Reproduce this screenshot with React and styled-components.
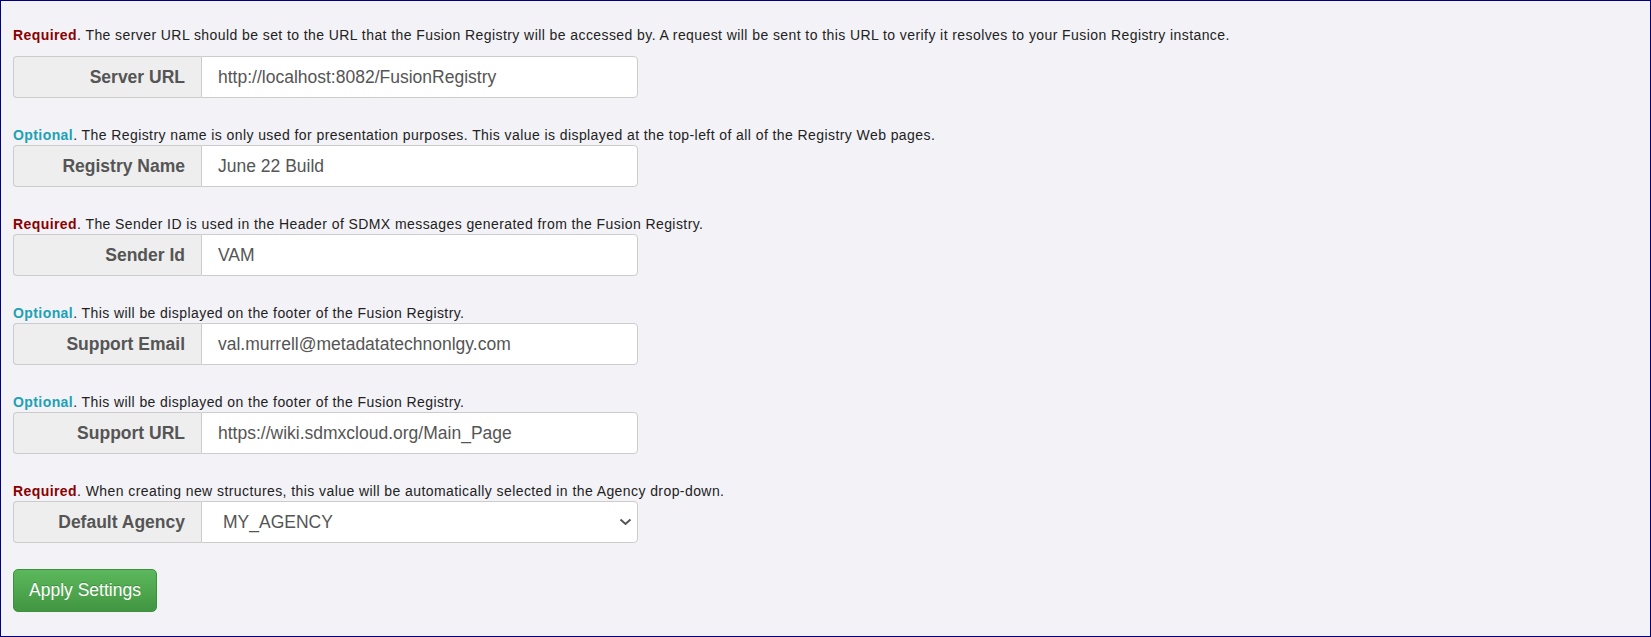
import React from 'react';
import styled, { createGlobalStyle } from 'styled-components';

const GlobalStyle = createGlobalStyle`
  html, body {
    margin: 0;
    padding: 0;
    background: #f2f2f7;
  }
  * {
    box-sizing: border-box;
  }
`;

const fields = [
  {
    level: 'required',
    note: 'The server URL should be set to the URL that the Fusion Registry will be accessed by. A request will be sent to this URL to verify it resolves to your Fusion Registry instance.',
    label: 'Server URL',
    value: 'http://localhost:8082/FusionRegistry',
  },
  {
    level: 'optional',
    note: 'The Registry name is only used for presentation purposes. This value is displayed at the top-left of all of the Registry Web pages.',
    label: 'Registry Name',
    value: 'June 22 Build',
  },
  {
    level: 'required',
    note: 'The Sender ID is used in the Header of SDMX messages generated from the Fusion Registry.',
    label: 'Sender Id',
    value: 'VAM',
  },
  {
    level: 'optional',
    note: 'This will be displayed on the footer of the Fusion Registry.',
    label: 'Support Email',
    value: 'val.murrell@metadatatechnonlgy.com',
  },
  {
    level: 'optional',
    note: 'This will be displayed on the footer of the Fusion Registry.',
    label: 'Support URL',
    value: 'https://wiki.sdmxcloud.org/Main_Page',
  },
  {
    level: 'required',
    note: 'When creating new structures, this value will be automatically selected in the Agency drop-down.',
    label: 'Default Agency',
    value: 'MY_AGENCY',
    select: true,
  },
];

const Chevron = () => (
  <svg width="13" height="8" viewBox="0 0 13 8">
    <path d="M1.5 1.5 L6.5 6 L11.5 1.5" fill="none" stroke="#555" strokeWidth="2" />
  </svg>
);

const App = () => {
  return (
    <>
      <GlobalStyle />
      <Page>
        {fields.map((f, i) => (
          <Group key={f.label}>
            <Note $first={i === 0}>
              <Level $level={f.level}>{f.level === 'required' ? 'Required' : 'Optional'}</Level>. {f.note}
            </Note>
            <InputGroup>
              <Addon>{f.label}</Addon>
              {f.select ? (
                <SelectBox>
                  <span>{f.value}</span>
                  <Chevron />
                </SelectBox>
              ) : (
                <Field>{f.value}</Field>
              )}
            </InputGroup>
          </Group>
        ))}
        <ApplyButton>Apply Settings</ApplyButton>
      </Page>
    </>
  );
};

const Page = styled.div`
  width: 1651px;
  height: 637px;
  border: 1px solid #000080;
  background: #f2f2f7;
  padding: 24px 12px 0 12px;
  font-family: "Liberation Sans", Arial, sans-serif;
`;

const Group = styled.div`
  margin-bottom: 27px;
`;

const Note = styled.div`
  font-size: 14px;
  letter-spacing: 0.42px;
  line-height: 20px;
  color: #222;
  white-space: nowrap;
  margin-bottom: ${p => (p.$first ? '11px' : '0')};
`;

const Level = styled.b`
  color: ${p => (p.$level === 'required' ? '#8b0000' : '#1da1b4')};
`;

const InputGroup = styled.div`
  display: flex;
  width: 625px;
  height: 42px;
  font-size: 17.5px;
  color: #555;
`;

const Addon = styled.div`
  width: 188px;
  flex: none;
  display: flex;
  align-items: center;
  justify-content: flex-end;
  padding: 0 16px;
  font-weight: bold;
  background: #eee;
  border: 1px solid #ccc;
  border-right: 0;
  border-radius: 4px 0 0 4px;
`;

const Field = styled.div`
  flex: 1;
  display: flex;
  align-items: center;
  padding: 0 16px;
  background: #fff;
  border: 1px solid #ccc;
  border-radius: 0 4px 4px 0;
`;

const SelectBox = styled(Field)`
  justify-content: space-between;
  padding: 0 5px 0 21px;
`;

const ApplyButton = styled.button`
  display: block;
  width: 144px;
  height: 43px;
  margin-top: -1px;
  padding: 0;
  white-space: nowrap;
  font-family: "Liberation Sans", Arial, sans-serif;
  font-size: 17.5px;
  color: #fff;
  background: linear-gradient(#5cb85c, #419641);
  border: 1px solid #3e8f3e;
  border-radius: 5px;
  text-shadow: 0 -1px 0 rgba(0, 0, 0, 0.2);
`;

export default App;
